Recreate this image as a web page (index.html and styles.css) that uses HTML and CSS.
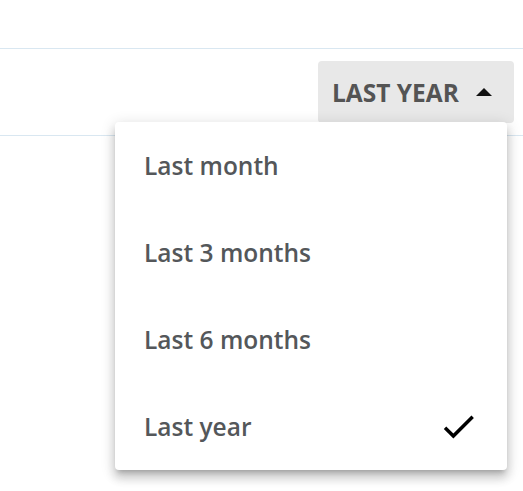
FILE: index.html
```html
<!DOCTYPE html>
<html>
<head>
<meta charset="utf-8">
<link rel="stylesheet" href="styles.css">
</head>
<body>
<div class="page">
  <div class="header"></div>
  <div class="toolbar">
    <button class="range-btn">
      <span class="range-label">LAST YEAR</span>
      <svg class="caret" width="16" height="8" viewBox="0 0 16 8"><path d="M0 8 L8 0 L16 8 Z" fill="#111"/></svg>
    </button>
  </div>
  <div class="menu">
    <div class="item">Last month</div>
    <div class="item">Last 3 months</div>
    <div class="item">Last 6 months</div>
    <div class="item selected">Last year
      <svg class="check" width="41" height="41" viewBox="0 0 24 24"><path d="M9 16.17L4.83 12l-1.42 1.41L9 19 21 7l-1.41-1.41z" fill="#000"/></svg>
    </div>
  </div>
</div>
</body>
</html>
```
FILE: styles.css
```css
html, body {
  margin: 0;
  padding: 0;
  background: #fff;
  font-family: "Open Sans", "Liberation Sans", sans-serif;
}
.page {
  position: relative;
  width: 523px;
  height: 491px;
  overflow: hidden;
}
.header {
  height: 48px;
  border-bottom: 1px solid #d9e7f1;
}
.toolbar {
  height: 86px;
  border-bottom: 1px solid #d9e7f1;
  display: flex;
  align-items: center;
  justify-content: flex-end;
  padding-right: 9px;
}
.range-btn {
  width: 196px;
  height: 62px;
  background: #e8e8e8;
  border: none;
  border-radius: 4px;
  display: flex;
  align-items: center;
  padding: 0 0 0 14px;
  font-family: inherit;
  cursor: pointer;
}
.range-label {
  font-size: 24.5px;
  font-weight: 700;
  color: #545454;
}
.caret {
  margin-left: 17px;
}
.menu {
  position: absolute;
  left: 115px;
  top: 122px;
  width: 392px;
  background: #fff;
  border-radius: 4px;
  box-shadow: 0 5px 5px -3px rgba(0,0,0,0.2), 0 8px 10px 1px rgba(0,0,0,0.14), 0 3px 14px 2px rgba(0,0,0,0.12);
}
.item {
  height: 87px;
  display: flex;
  align-items: center;
  justify-content: space-between;
  padding: 0 28px 0 29px;
  font-size: 24.5px;
  font-weight: 600;
  color: #54575a;
}
```
